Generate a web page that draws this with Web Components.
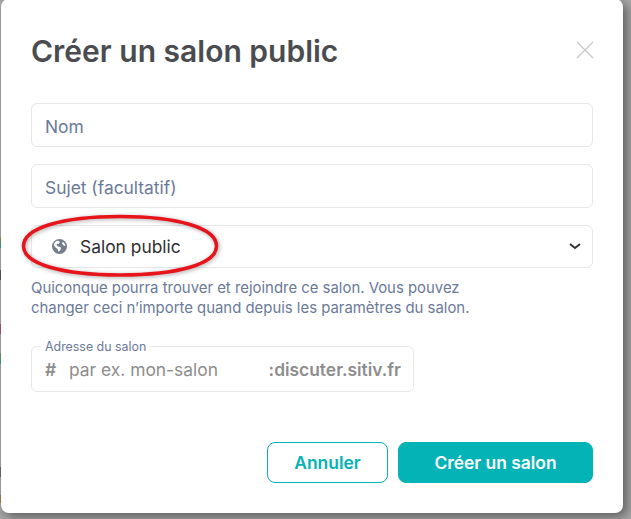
<!DOCTYPE html>
<html lang="fr">
<head>
<meta charset="utf-8">
<title>Créer un salon public</title>
<style>
    html, body { margin: 0; height: 100%; overflow: hidden; }
    body {
        /* bits of the page behind the dialog, only seen in the first pixel column */
        background:
            linear-gradient(to bottom,
                transparent 237px, #8a9a5a 237px, #3aa09a 248px, transparent 248px,
                transparent 270px, #55585c 270px, #55585c 280px, transparent 280px,
                transparent 324px, #b0507a 324px, #b0507a 334px, transparent 334px,
                transparent 353px, #7f9a5a 353px, #2fa59a 364px, transparent 364px,
                transparent 467px, #6a6d78 467px, #6a6d78 477px, transparent 477px,
                transparent 495px, #a08050 495px, #a08050 503px, transparent 503px
            ) 0 0 / 1px 100% no-repeat,
            #a8a8a8;
        font-family: Inter, "Liberation Sans", sans-serif;
    }
</style>
</head>
<body>
<room-dialog title-text="Créer un salon public">
    <text-field label="Nom"></text-field>
    <text-field label="Sujet (facultatif)"></text-field>
    <visibility-select label="Salon public"></visibility-select>
    <help-text>Quiconque pourra trouver et rejoindre ce salon. Vous pouvez<br>changer ceci n’importe quand depuis les paramètres du salon.</help-text>
    <address-field legend="Adresse du salon" placeholder="par ex. mon-salon" domain=":discuter.sitiv.fr"></address-field>
    <dialog-button slot="actions" kind="outline">Annuler</dialog-button>
    <dialog-button slot="actions" kind="primary">Créer un salon</dialog-button>
</room-dialog>
<red-ellipse></red-ellipse>

<script>
class RoomDialog extends HTMLElement {
    constructor(){
        super();
        this.attachShadow({mode: 'open'}).innerHTML = `
            <style>
                :host{
                    display: flex;
                    flex-direction: column;
                    box-sizing: border-box;
                    width: 622px;
                    height: 514px;
                    margin: -1px 0 0 1px;
                    padding: 0 30px 30px 30px;
                    background: #fff;
                    border-radius: 8px;
                    box-shadow: 4px 4px 12px rgba(0,0,0,.45);
                }
                header{
                    display: flex;
                    justify-content: space-between;
                    align-items: center;
                    height: 104px;
                    box-sizing: border-box;
                    padding-bottom: 2px;
                }
                h1{
                    margin: 2px 0 0;
                    font-size: 30px;
                    font-weight: 600;
                    color: #4a4c50;
                }
                svg{ display: block; margin-right: -1px; }
                .fields{ display: flex; flex-direction: column; }
                .actions{
                    margin-top: auto;
                    display: flex;
                    justify-content: flex-end;
                    gap: 10px;
                }
            </style>
            <header>
                <h1></h1>
                <svg width="18" height="18" viewBox="0 0 18 18" fill="none" stroke="#c9c9c9" stroke-width="1.3"><path d="M1 1L17 17M17 1L1 17"/></svg>
            </header>
            <div class="fields"><slot></slot></div>
            <div class="actions"><slot name="actions"></slot></div>
        `;
        this.shadowRoot.querySelector("h1").textContent = this.getAttribute("title-text");
    }
}

class TextField extends HTMLElement {
    constructor(){
        super();
        this.attachShadow({mode: 'open'}).innerHTML = `
            <style>
                :host{
                    display: flex;
                    align-items: center;
                    box-sizing: border-box;
                    height: 44px;
                    margin-bottom: 17px;
                    padding: 2px 13px 0;
                    border: 1px solid #e7e7e7;
                    border-radius: 6px;
                    font-size: 17.4px;
                    color: #6b7a99;
                }
            </style>
            <span></span>
        `;
        this.shadowRoot.querySelector("span").textContent = this.getAttribute("label");
    }
}

class VisibilitySelect extends HTMLElement {
    constructor(){
        super();
        this.attachShadow({mode: 'open'}).innerHTML = `
            <style>
                :host{
                    display: flex;
                    align-items: center;
                    gap: 13px;
                    box-sizing: border-box;
                    height: 43px;
                    padding: 0 11px 0 20px;
                    border: 1px solid #e7e7e7;
                    border-radius: 6px;
                    font-size: 17.4px;
                    color: #2e2f32;
                }
                span{ flex: 1; }
            </style>
            <svg width="15" height="15" viewBox="0 0 14 14">
                <circle cx="7" cy="7" r="7" fill="#737d8c"/>
                <path d="M4.2 1.6L6.6 1.9L7.4 3.2L6 4.6L4.8 4.5L4.2 5.8L5.8 7L7.9 7.4L8.4 9L7.2 11.2L6 12L5.2 9.4L3 7.6L1.6 5.6L2.4 3.4Z M10 2.6L11.6 4L12.6 6.6L11 6.2L9.4 4.4Z" fill="#fff"/>
            </svg>
            <span></span>
            <svg width="12" height="7" viewBox="0 0 12 7" fill="none" stroke="#2e2f32" stroke-width="1.8"><path d="M1 1L6 5L11 1"/></svg>
        `;
        this.shadowRoot.querySelector("span").textContent = this.getAttribute("label");
    }
}

class HelpText extends HTMLElement {
    constructor(){
        super();
        this.attachShadow({mode: 'open'}).innerHTML = `
            <style>
                :host{
                    display: block;
                    margin-top: 10px;
                    font-size: 14.9px;
                    line-height: 20px;
                    color: #6b7a99;
                }
            </style>
            <slot></slot>
        `;
    }
}

class AddressField extends HTMLElement {
    constructor(){
        super();
        this.attachShadow({mode: 'open'}).innerHTML = `
            <style>
                :host{
                    display: flex;
                    align-items: center;
                    position: relative;
                    box-sizing: border-box;
                    width: 383px;
                    height: 46px;
                    margin-top: 28px;
                    padding: 0 12px 0 13px;
                    border: 1px solid #e7e7e7;
                    border-radius: 6px;
                    font-size: 17.4px;
                    color: #8d8d8d;
                }
                .legend{
                    position: absolute;
                    left: 9px;
                    top: -7px;
                    padding: 0 4px;
                    background: #fff;
                    font-size: 12.4px;
                    line-height: 14px;
                    color: #6b7a99;
                }
                b{ font-weight: 600; }
                .hash{ width: 24px; }
                .ph{ flex: 1; }
            </style>
            <span class="legend"></span>
            <b class="hash">#</b>
            <span class="ph"></span>
            <b class="domain"></b>
        `;
        this.shadowRoot.querySelector(".legend").textContent = this.getAttribute("legend");
        this.shadowRoot.querySelector(".ph").textContent = this.getAttribute("placeholder");
        this.shadowRoot.querySelector(".domain").textContent = this.getAttribute("domain");
    }
}

class DialogButton extends HTMLElement {
    constructor(){
        super();
        this.attachShadow({mode: 'open'}).innerHTML = `
            <style>
                :host{
                    display: flex;
                    align-items: center;
                    justify-content: center;
                    box-sizing: border-box;
                    height: 41px;
                    border: 1px solid #03b3b5;
                    border-radius: 8px;
                    font-size: 17.4px;
                    font-weight: 600;
                }
                :host([kind="outline"]){ width: 121px; color: #03b3b5; background: #fff; }
                :host([kind="primary"]){ width: 195px; color: #fff; background: #03b3b5; }
            </style>
            <slot></slot>
        `;
    }
}

// hand drawn annotation lying over the select
class RedEllipse extends HTMLElement {
    constructor(){
        super();
        this.attachShadow({mode: 'open'}).innerHTML = `
            <style>
                :host{ position: absolute; left: 18px; top: 211px; display: block; pointer-events: none; }
                svg{ display: block; filter: drop-shadow(1px 1px 2px rgba(0,0,0,.35)); }
            </style>
            <svg width="206" height="70" viewBox="0 0 206 70" fill="none">
                <path d="M5.5 35C5.5 17 44 5.5 102 5.5C160 5.5 198.5 17 198.5 35C198.5 53 160 64 102 64C44 64 5.5 53 5.5 35Z" stroke="#e8141c" stroke-width="3.6"/>
            </svg>
        `;
    }
}

window.customElements.define("room-dialog", RoomDialog);
window.customElements.define("text-field", TextField);
window.customElements.define("visibility-select", VisibilitySelect);
window.customElements.define("help-text", HelpText);
window.customElements.define("address-field", AddressField);
window.customElements.define("dialog-button", DialogButton);
window.customElements.define("red-ellipse", RedEllipse);
</script>
</body>
</html>
